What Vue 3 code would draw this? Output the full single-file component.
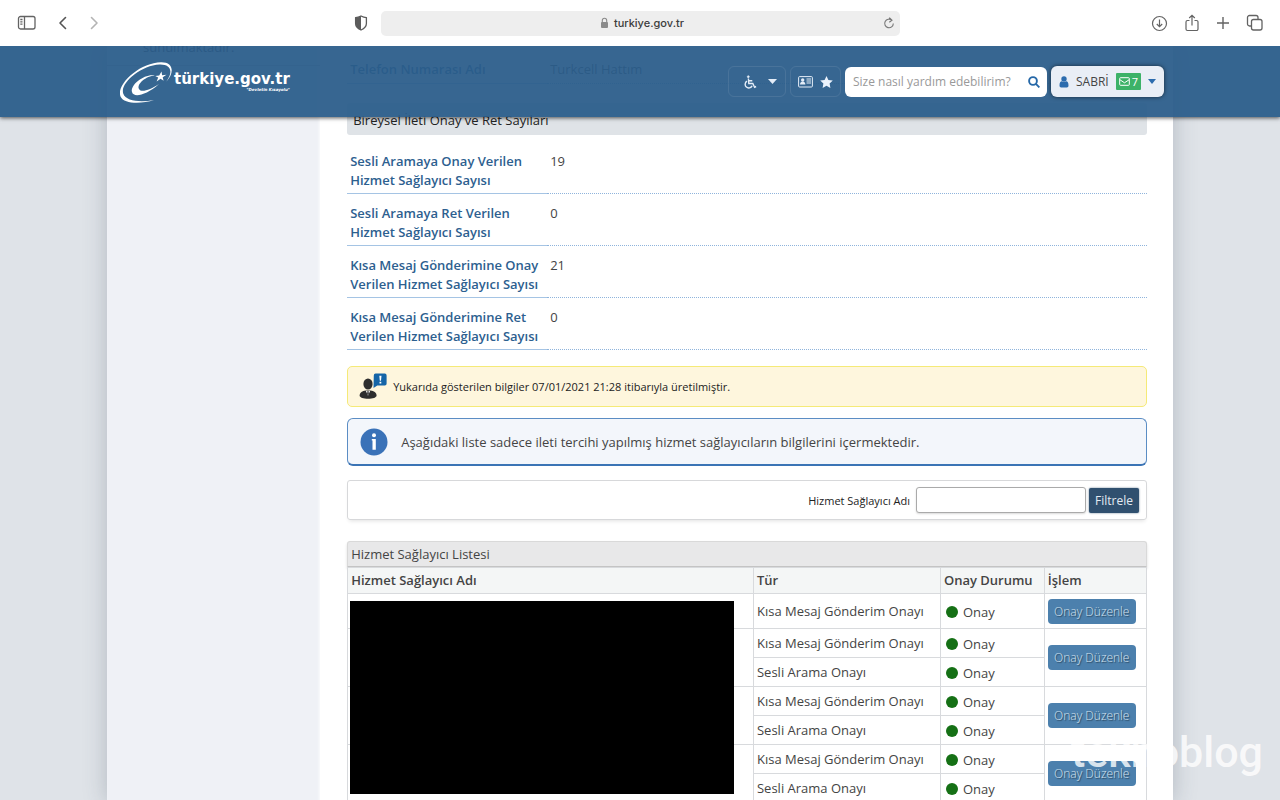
<script setup>
import { ref } from 'vue'

const address = ref('turkiye.gov.tr')
const query = ref('')
const provider = ref('')

const counts = [
  { label: 'Sesli Aramaya Onay Verilen Hizmet Sağlayıcı Sayısı', value: 19 },
  { label: 'Sesli Aramaya Ret Verilen Hizmet Sağlayıcı Sayısı', value: 0 },
  { label: 'Kısa Mesaj Gönderimine Onay Verilen Hizmet Sağlayıcı Sayısı', value: 21 },
  { label: 'Kısa Mesaj Gönderimine Ret Verilen Hizmet Sağlayıcı Sayısı', value: 0 },
]

const sms = 'Kısa Mesaj Gönderim Onayı'
const voice = 'Sesli Arama Onayı'
const providers = [[sms], [sms, voice], [sms, voice], [sms, voice]]
</script>

<template>
  <div class="window">
    <div class="toolbar">
      <div class="tools left">
        <button class="tool" aria-label="Kenar çubuğu">
          <svg width="20" height="16" viewBox="0 0 20 16" fill="none" stroke="#636363" stroke-width="1.3">
            <rect x="1.5" y="1.5" width="16.5" height="12.5" rx="2" />
            <path d="M7.5 1.5v12.500M3.300 4.500h2.200M3.300 6.800h2.200M3.300 9.100h2.200" />
          </svg>
        </button>
        <button class="tool" aria-label="Geri">
          <svg width="10" height="14" viewBox="0 0 10 14" fill="none" stroke="#555" stroke-width="1.6" stroke-linecap="round" stroke-linejoin="round"><path d="M7.500 1.500L2 7l5.500 5.500" /></svg>
        </button>
        <button class="tool" aria-label="İleri">
          <svg width="10" height="14" viewBox="0 0 10 14" fill="none" stroke="#b4b4b4" stroke-width="1.6" stroke-linecap="round" stroke-linejoin="round"><path d="M2.500 1.500L8 7l-5.500 5.500" /></svg>
        </button>
      </div>
      <div class="center">
        <button class="tool" aria-label="Gizlilik raporu">
          <svg width="14" height="16" viewBox="0 0 14 16"><path d="M7 1c2 1 3.800 1.500 5.400 1.700v5.800c0 3-2.400 5.200-5.400 6.500-3-1.300-5.400-3.500-5.400-6.500V2.700C3.200 2.500 5 2 7 1z" fill="none" stroke="#5c5c5c" stroke-width="1.300" /><path d="M7 1v14c-3-1.300-5.400-3.500-5.400-6.500V2.700C3.200 2.500 5 2 7 1z" fill="#5c5c5c" /></svg>
        </button>
        <div class="address">
          <span class="site">
            <svg width="9" height="12" viewBox="0 0 9 12"><rect x="1" y="5" width="7" height="6" rx="1" fill="#8b8b8b" /><path d="M2.300 5.500V3.400a2.200 2.200 0 0 1 4.400 0v2.100" fill="none" stroke="#8b8b8b" stroke-width="1.100" /></svg>
            {{ address }}
          </span>
          <button class="tool" aria-label="Yenile">
            <svg width="12" height="13" viewBox="0 0 12 13" fill="none" stroke="#777" stroke-width="1.100"><path d="M8.800 3.200A4.300 4.300 0 1 0 10.300 6.500M6.300.6l2.700 2.700-2.700 2" /></svg>
          </button>
        </div>
      </div>
      <div class="tools right">
        <button class="tool" aria-label="İndirilenler">
          <svg width="17" height="17" viewBox="0 0 17 17" fill="none" stroke="#636363" stroke-width="1.200"><circle cx="8.500" cy="8.500" r="7" /><path d="M8.500 4.500v7M5.800 9l2.700 2.700L11.200 9" /></svg>
        </button>
        <button class="tool" aria-label="Paylaş">
          <svg width="16" height="18" viewBox="0 0 16 18" fill="none" stroke="#636363" stroke-width="1.200"><path d="M5.500 6.500h-2a1.500 1.500 0 0 0-1.500 1.500v7a1.500 1.500 0 0 0 1.500 1.500h9A1.500 1.500 0 0 0 14 15V8a1.500 1.500 0 0 0-1.500-1.500h-2M8 11.500v-10M5.200 4L8 1.300 10.800 4" /></svg>
        </button>
        <button class="tool" aria-label="Yeni sekme">
          <svg width="14" height="14" viewBox="0 0 14 14" stroke="#636363" stroke-width="1.400"><path d="M7 1v12M1 7h12" /></svg>
        </button>
        <button class="tool" aria-label="Sekmeler">
          <svg width="18" height="18" viewBox="0 0 18 18" fill="none" stroke="#636363" stroke-width="1.300"><rect x="5.500" y="5.500" width="10.500" height="10.500" rx="2" /><path d="M5.500 12H3.500a2 2 0 0 1-2-2V3.500a2 2 0 0 1 2-2H10a2 2 0 0 1 2 2v2" /></svg>
        </button>
      </div>
    </div>

    <div class="page">
      <header class="site-header">
        <div class="header-inner">
          <a class="logo" href="#">
            <svg width="56" height="44" viewBox="0 0 56 44" fill="#fff">
              <path fill-rule="evenodd" d="M36 40C24 44 6 44.500 2.500 36.500-2 24 22 2.500 43 2.200c13-.2 13.500 11 5.200 19.500C56 11.500 52.500 4.200 41.500 4.600 23 5.500 2 23 5.200 33.500c2.500 8 18 9 30.800 6.500z" />
              <path d="M37 15.500C28 13 12 24 14 32c1.500 6 14 3.500 27-8-9 6-18 9-20 5-2.500-5 7-13 16-13.500z" />
              <path d="M43.500 11.500l.6 3.700 4.400-.4-3.800 2.400.9 3.600-3-2-4 2.600 1.600-4-3-1.500 4-.4z" />
            </svg>
            <span class="brand">
              <strong>türkiye.gov.tr</strong>
              <em>"Devletin Kısayolu"</em>
            </span>
          </a>
          <nav class="actions" aria-label="Kullanıcı">
            <button class="ghost access" aria-label="Erişilebilirlik">
              <svg width="14" height="14" viewBox="0 0 14 14" fill="none" stroke="#e4edf8" stroke-width="1.400"><circle cx="5.300" cy="1.700" r="1" fill="#e4edf8" stroke-width=".6" /><path d="M5.400 3.500l.4 5h4l1.800 3.700 1.500-.7M5.600 5.700h3.700M4 6.200a3.600 3.600 0 1 0 5.100 4.500" /></svg>
              <svg width="9" height="5" viewBox="0 0 9 5"><path d="M0 0h9L4.500 5z" fill="#e4edf8" /></svg>
            </button>
            <button class="ghost cards" aria-label="Kısayollar">
              <svg width="15" height="12" viewBox="0 0 15 12" fill="#e4edf8"><rect x=".6" y=".6" width="13.800" height="10.400" rx="1" fill="none" stroke="#e4edf8" stroke-width="1" /><circle cx="4.700" cy="4" r="1.700" /><path d="M2 8.500c0-4 5.400-4 5.400 0zM8.500 2.500h4.500v1H8.500zM8.500 4.500h4.500v1H8.500zM8.500 6.500h4.500v1H8.500z" /></svg>
              <svg width="13" height="12" viewBox="0 0 13 12"><path d="M6.500 0l1.900 4 4.400.5-3.200 3 .8 4.400-3.900-2.200-3.900 2.200.8-4.400-3.200-3 4.400-.5z" fill="#eaf2fc" /></svg>
            </button>
            <form class="search" @submit.prevent>
              <input v-model="query" type="text" aria-label="Arama" placeholder="Size nasıl yardım edebilirim?">
              <button aria-label="Ara">
                <svg width="12" height="12" viewBox="0 0 12 12" fill="none" stroke="#2668a8" stroke-width="1.900"><circle cx="5" cy="5" r="3.900" /><path d="M7.900 7.900l3.500 3.500" /></svg>
              </button>
            </form>
            <button class="user">
              <svg width="10" height="12" viewBox="0 0 10 12" fill="#2c6cae"><circle cx="5" cy="3" r="2.700" /><path d="M.5 9.500c0-3 1-4.200 2.300-4.200a4 4 0 0 0 4.400 0c1.300 0 2.300 1.200 2.300 4.200 0 1.300-.6 2-1.700 2H2.200c-1.100 0-1.700-.7-1.700-2z" /></svg>
              <span>SABRİ</span>
              <span class="badge">
                <svg width="11" height="9" viewBox="0 0 11 9" fill="none" stroke="#fff" stroke-width="1"><rect x=".7" y=".7" width="9.600" height="7.600" rx=".8" /><path d="M1 2.800l4.500 3 4.500-3" /></svg>
                7
              </span>
              <svg width="8" height="5" viewBox="0 0 8 5"><path d="M0 0h8L4 5z" fill="#2c6cae" /></svg>
            </button>
          </nav>
        </div>
      </header>

      <div class="container">
        <aside><p>sunulmaktadır.</p></aside>
        <main>
          <dl class="facts phone">
            <div class="fact"><dt>Telefon Numarası Adı</dt><dd>Turkcell Hattım</dd></div>
          </dl>
          <h2>Bireysel İleti Onay ve Ret Sayıları</h2>
          <dl class="facts">
            <div v-for="c in counts" :key="c.label" class="fact"><dt>{{ c.label }}</dt><dd>{{ c.value }}</dd></div>
          </dl>

          <p class="notice">
            <svg width="28" height="28" viewBox="0 0 28 28">
              <ellipse cx="9" cy="11" rx="4.600" ry="5.600" fill="#2e2e2e" />
              <path d="M.6 22.500c0-3 3-4.500 6-5h5c3 .5 6 2 6 5 0 2-4 3.300-8.500 3.300S.6 24.500.6 22.500z" fill="#2e2e2e" />
              <path d="M6.700 17.400L9 22.800l2.300-5.400-2.300 1z" fill="#fff" /><path d="M8.500 18.200h1l.4 2.700-.9 1.400-.9-1.400z" fill="#2e2e2e" />
              <path d="M16.500.6h9.300a1.800 1.800 0 0 1 1.800 1.800v8.300a1.800 1.800 0 0 1-1.800 1.800h-7.500L14.500 15l.3-12.600A1.800 1.800 0 0 1 16.500.6z" fill="#1565a7" />
              <path d="M20.300 2.800h2.200l-.5 5h-1.200zM20.500 8.700h1.800v1.800h-1.800z" fill="#fff" />
            </svg>
            Yukarıda gösterilen bilgiler 07/01/2021 21:28 itibarıyla üretilmiştir.
          </p>

          <p class="info">
            <svg width="28" height="28" viewBox="0 0 28 28"><circle cx="14" cy="14" r="13.500" fill="#3a72b8" /><circle cx="14" cy="7.200" r="2" fill="#fff" /><path d="M11.800 11h4v10.800h-3.300V12.500h-.7z" fill="#fff" /></svg>
            Aşağıdaki liste sadece ileti tercihi yapılmış hizmet sağlayıcıların bilgilerini içermektedir.
          </p>

          <form class="filter" @submit.prevent>
            <label for="provider">Hizmet Sağlayıcı Adı</label>
            <input id="provider" v-model="provider" type="text">
            <button>Filtrele</button>
          </form>

          <div class="list">
            <table>
              <caption>Hizmet Sağlayıcı Listesi</caption>
              <colgroup><col class="c-name"><col class="c-type"><col class="c-state"><col class="c-action"></colgroup>
              <thead>
                <tr><th>Hizmet Sağlayıcı Adı</th><th>Tür</th><th>Onay Durumu</th><th>İşlem</th></tr>
              </thead>
              <tbody v-for="(types, i) in providers" :key="i">
                <tr v-for="(type, j) in types" :key="type" :class="{ single: types.length === 1 }">
                  <td v-if="j === 0" :rowspan="types.length"></td>
                  <td>{{ type }}</td>
                  <td><span class="state">Onay</span></td>
                  <td v-if="j === 0" :rowspan="types.length"><button class="edit">Onay Düzenle</button></td>
                </tr>
              </tbody>
            </table>
            <div class="redacted"></div>
          </div>
        </main>
      </div>
      <div class="watermark">teknoblog</div>
    </div>
  </div>
</template>

<style>
body { margin: 0; overflow: hidden; }
</style>

<style scoped>
* { box-sizing: border-box; }
.window { height: 100vh; display: flex; flex-direction: column; overflow: hidden; font-family: "Open Sans", sans-serif; font-size: 13px; color: #444; }
button, input { font-family: inherit; margin: 0; }
button { border: 0; padding: 0; background: none; cursor: pointer; }
svg { display: block; flex: none; }
p, dl, dd, h2 { margin: 0; }

.toolbar { flex: none; height: 46px; display: grid; grid-template-columns: 27fr 546px 29fr; align-items: center; padding: 0 16px; background: #fff; }
.tools { display: flex; align-items: center; }
.left { gap: 21px; padding-left: 1px; }
.right { justify-content: flex-end; gap: 16px; }
.center { display: flex; align-items: center; gap: 13px; }
.address { flex: 1; height: 25px; display: flex; align-items: center; padding-right: 5px; border-radius: 5px; background: #eee; }
.site { flex: 1; display: flex; justify-content: center; align-items: center; gap: 5px; padding-left: 19px; font: 500 11px/16px Inter, sans-serif; color: #3c3c3c; }

.page { position: relative; flex: 1; min-height: 0; overflow: hidden; background: #dfe3e8; }
.site-header { position: absolute; z-index: 2; top: 0; left: 0; right: 0; background: rgba(42, 92, 138, .94); box-shadow: 0 1px 4px rgba(0, 0, 0, .65); }
.header-inner { max-width: 1066px; height: 71px; margin: 0 auto; padding: 0 9px 0 11px; display: flex; align-items: center; justify-content: space-between; }
.logo { display: flex; align-items: center; color: #fff; text-decoration: none; }
.brand { display: flex; flex-direction: column; font-family: "DejaVu Sans", sans-serif; }
.brand strong { font-size: 15px; line-height: 17px; }
.brand em { align-self: flex-end; font-size: 4px; line-height: 4px; font-weight: bold; }
.actions { display: flex; align-items: center; gap: 4px; }
.ghost { height: 31px; display: flex; align-items: center; justify-content: center; border: 1px solid rgba(255, 255, 255, .09); border-radius: 6px; }
.access { width: 58px; gap: 11px; padding-left: 5px; }
.cards { width: 51px; gap: 7px; }
.search { width: 202px; height: 30px; display: flex; align-items: center; padding: 0 7px 0 8px; border-radius: 6px; background: #fff; }
.search input { flex: 1; min-width: 0; height: 28px; padding: 0; border: 0; outline: 0; background: none; font-size: 12px; }
.search input::placeholder { color: #999; opacity: 1; }
.user { width: 113px; height: 31px; display: flex; align-items: center; justify-content: space-between; padding: 0 8px; border-radius: 6px; background: #e9eef6; box-shadow: 0 0 4px rgba(0, 0, 0, .6); font-size: 12px; color: #444; }
.badge { display: flex; align-items: center; gap: 2px; height: 17px; padding: 0 3px; border-radius: 1px; background: #3cb268; color: #fff; font-size: 11px; }

.container { max-width: 1066px; min-height: 100%; margin: 0 auto; display: flex; background: #fff; box-shadow: 0 0 22px rgba(60, 75, 90, .28); }
aside { width: 20%; flex: none; background: #eff1f6; box-shadow: inset -1px 0 3px rgba(255, 255, 255, .8); }
aside p { height: 20px; padding-left: 36px; line-height: 2px; border-bottom: 1px solid #ccc; color: #333; }
main { flex: 1; min-width: 0; padding: 0 26px 0 27px; }
.fact { display: flex; line-height: 19px; }
.fact dt { width: 25%; padding: 10px 3px 3px; border-bottom: 1px solid #a5c4e4; font-weight: 600; color: #2d608f; }
.fact dd { flex: 1; padding: 10px 3px 3px; border-bottom: 1px dotted #8fb4dc; }
.phone dt, .phone dd { padding-top: 14px; padding-bottom: 4px; }
h2 { margin: 19px 0 7px; height: 32px; padding: 0 6px; border-radius: 3px; background: #dfe3e7; font-size: 13px; font-weight: 400; line-height: 35px; color: #222; }

.notice { margin-top: 16px; height: 41px; display: flex; align-items: center; gap: 6px; padding: 0 11px; border: 1px solid #f5ea78; border-radius: 5px; background: #fef6dd; font-size: 11px; color: #222; }
.info { margin-top: 11px; height: 48px; display: flex; align-items: center; gap: 13px; padding: 0 12px; border: 1px solid #5b8dc4; border-bottom: 2px solid #3b74b5; border-radius: 6px; background: #f3f6fb; }
.filter { margin-top: 14px; height: 40px; display: flex; align-items: center; justify-content: flex-end; gap: 3px; padding: 0 7px; border: 1px solid #d7d8da; border-radius: 3px; box-shadow: 0 3px 4px -2px rgba(0, 0, 0, .12); }
.filter label { margin-right: 3px; font-size: 11px; color: #222; }
.filter input { width: 170px; height: 26px; padding: 0 5px; border: 1px solid #aaa; border-radius: 3px; background: #fff; box-shadow: 0 1px 2px rgba(0, 0, 0, .15); }
.filter button { width: 50px; height: 25px; border-radius: 2px; background: #30506f; box-shadow: 0 0 2px rgba(48, 80, 111, .8); font-size: 12px; color: #e4ebf2; }

.list { position: relative; margin-top: 21px; }
table { width: 100%; table-layout: fixed; border-collapse: collapse; }
.c-name { width: 50.8%; }
.c-type { width: 23.4%; }
.c-state { width: 13%; }
.c-action { width: 12.8%; }
caption { height: 26px; padding: 0 3px; border: 1px solid #d9d9d9; border-bottom-color: #c4c4c4; border-radius: 3px 3px 0 0; background: #e8e8e9; box-shadow: 0 2px 3px rgba(0, 0, 0, .14); text-align: left; line-height: 25px; }
th, td { height: 29px; padding: 0 3px; border: 1px solid #d8dadd; text-align: left; line-height: 19px; }
th { height: 26px; background: #f4f6f6; font-weight: 600; }
.single td { height: 35px; }
.state { display: flex; align-items: center; gap: 5px; padding: 2px 0 0 2px; }
.state::before { content: ""; width: 12px; height: 12px; border-radius: 50%; background: #157015; }
.edit { display: block; width: 88px; height: 25px; border-radius: 4px; background: #4c80ad; font-size: 12px; font-weight: 300; color: #d3e2ef; text-shadow: 1px 1px 1px rgba(0, 0, 0, .5); }
.redacted { position: absolute; top: 60px; left: 3px; width: 48%; height: 193px; background: #000; }
.watermark { position: absolute; z-index: 3; right: 17px; bottom: 20px; font: 500 43px/56px Roboto, sans-serif; color: rgba(255, 255, 255, .8); }
</style>
